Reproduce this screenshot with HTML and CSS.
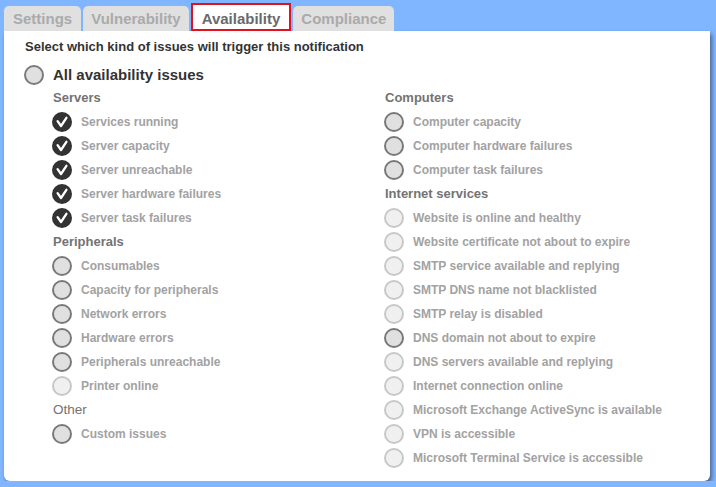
FILE: index.html
```html
<!DOCTYPE html>
<html>
<head>
<meta charset="utf-8">
<link rel="stylesheet" href="styles.css">
</head>
<body>
<div class="tabs">
  <div class="tab first">Settings</div>
  <div class="tab">Vulnerability</div>
  <div class="tab active">Availability</div>
  <div class="tab">Compliance</div>
</div>
<div class="panel">
  <div class="intro">Select which kind of issues will trigger this notification</div>
  <div class="all"><span class="radio"></span><span>All availability issues</span></div>
  <div class="cols">
    <div class="col">
      <div class="head">Servers</div>
      <div class="item"><span class="check"><svg width="20" height="20" viewBox="0 0 20 20"><circle cx="10" cy="10" r="10" fill="#333"/><path d="M5.6 9.2 L9 14 L14.4 5.8" fill="none" stroke="#fff" stroke-width="2.3" stroke-linecap="round" stroke-linejoin="round"/></svg></span>Services running</div>
      <div class="item"><span class="check"><svg width="20" height="20" viewBox="0 0 20 20"><circle cx="10" cy="10" r="10" fill="#333"/><path d="M5.6 9.2 L9 14 L14.4 5.8" fill="none" stroke="#fff" stroke-width="2.3" stroke-linecap="round" stroke-linejoin="round"/></svg></span>Server capacity</div>
      <div class="item"><span class="check"><svg width="20" height="20" viewBox="0 0 20 20"><circle cx="10" cy="10" r="10" fill="#333"/><path d="M5.6 9.2 L9 14 L14.4 5.8" fill="none" stroke="#fff" stroke-width="2.3" stroke-linecap="round" stroke-linejoin="round"/></svg></span>Server unreachable</div>
      <div class="item"><span class="check"><svg width="20" height="20" viewBox="0 0 20 20"><circle cx="10" cy="10" r="10" fill="#333"/><path d="M5.6 9.2 L9 14 L14.4 5.8" fill="none" stroke="#fff" stroke-width="2.3" stroke-linecap="round" stroke-linejoin="round"/></svg></span>Server hardware failures</div>
      <div class="item"><span class="check"><svg width="20" height="20" viewBox="0 0 20 20"><circle cx="10" cy="10" r="10" fill="#333"/><path d="M5.6 9.2 L9 14 L14.4 5.8" fill="none" stroke="#fff" stroke-width="2.3" stroke-linecap="round" stroke-linejoin="round"/></svg></span>Server task failures</div>
      <div class="head">Peripherals</div>
      <div class="item"><span class="radio"></span>Consumables</div>
      <div class="item"><span class="radio"></span>Capacity for peripherals</div>
      <div class="item"><span class="radio"></span>Network errors</div>
      <div class="item"><span class="radio"></span>Hardware errors</div>
      <div class="item"><span class="radio"></span>Peripherals unreachable</div>
      <div class="item"><span class="radio off"></span>Printer online</div>
      <div class="head light">Other</div>
      <div class="item"><span class="radio"></span>Custom issues</div>
    </div>
    <div class="col">
      <div class="head">Computers</div>
      <div class="item"><span class="radio"></span>Computer capacity</div>
      <div class="item"><span class="radio"></span>Computer hardware failures</div>
      <div class="item"><span class="radio"></span>Computer task failures</div>
      <div class="head">Internet services</div>
      <div class="item"><span class="radio off"></span>Website is online and healthy</div>
      <div class="item"><span class="radio off"></span>Website certificate not about to expire</div>
      <div class="item"><span class="radio off"></span>SMTP service available and replying</div>
      <div class="item"><span class="radio off"></span>SMTP DNS name not blacklisted</div>
      <div class="item"><span class="radio off"></span>SMTP relay is disabled</div>
      <div class="item"><span class="radio"></span>DNS domain not about to expire</div>
      <div class="item"><span class="radio off"></span>DNS servers available and replying</div>
      <div class="item"><span class="radio off"></span>Internet connection online</div>
      <div class="item"><span class="radio off"></span>Microsoft Exchange ActiveSync is available</div>
      <div class="item"><span class="radio off"></span>VPN is accessible</div>
      <div class="item"><span class="radio off"></span>Microsoft Terminal Service is accessible</div>
    </div>
  </div>
</div>
</body>
</html>
```

FILE: styles.css
```css
html, body {
  margin: 0;
  padding: 0;
  background: #80b5ff;
  font-family: "Liberation Sans", Arial, sans-serif;
}
.tabs {
  display: flex;
  align-items: flex-end;
  gap: 2px;
  padding-left: 4px;
  height: 31px;
}
.tab {
  height: 25px;
  line-height: 25px;
  padding: 0 8px;
  background: #e0e0e0;
  color: #aaaaaa;
  font-weight: bold;
  font-size: 15px;
  border-radius: 5px 5px 0 0;
  box-sizing: border-box;
}
.tab.first {
  padding: 0 9px;
}
.tab.active {
  height: 28px;
  line-height: 27px;
  background: #fff;
  color: #6a6a6a;
  border: 2px solid #e3101e;
  border-radius: 0;
  padding: 0 9px;
}
.panel {
  width: 706px;
  height: 450px;
  margin-left: 4px;
  background: #fff;
  border-radius: 0 0 6px 6px;
  box-shadow: 2px 3px 4px rgba(0, 0, 0, 0.45);
  padding: 7px 0 0 16px;
  box-sizing: border-box;
}
.intro {
  padding-left: 5px;
  line-height: 18px;
  font-size: 13px;
  font-weight: bold;
  color: #333;
}
.all {
  margin-top: 7px;
  height: 23px;
  display: flex;
  align-items: center;
  gap: 9px;
  font-size: 15px;
  font-weight: bold;
  color: #333;
  padding-left: 4px;
}
.cols {
  display: grid;
  grid-template-columns: 332px 1fr;
  padding-left: 32px;
}
.head {
  height: 24px;
  line-height: 24px;
  font-size: 13px;
  font-weight: bold;
  color: #737373;
  padding-left: 1px;
}
.head.light {
  font-weight: normal;
  font-size: 13.5px;
}
.item {
  height: 24px;
  display: flex;
  align-items: center;
  gap: 9px;
  font-size: 12px;
  font-weight: bold;
  color: #a2a2a2;
}
.check {
  width: 20px;
  height: 20px;
  display: block;
}
.check svg {
  display: block;
}
.radio {
  width: 16px;
  height: 16px;
  border: 2px solid #7a7a7a;
  background: #e0e0e0;
  border-radius: 50%;
  display: block;
  flex: none;
}
.radio.off {
  border-color: #c8c8c8;
  background: #f0f0f0;
}
```
